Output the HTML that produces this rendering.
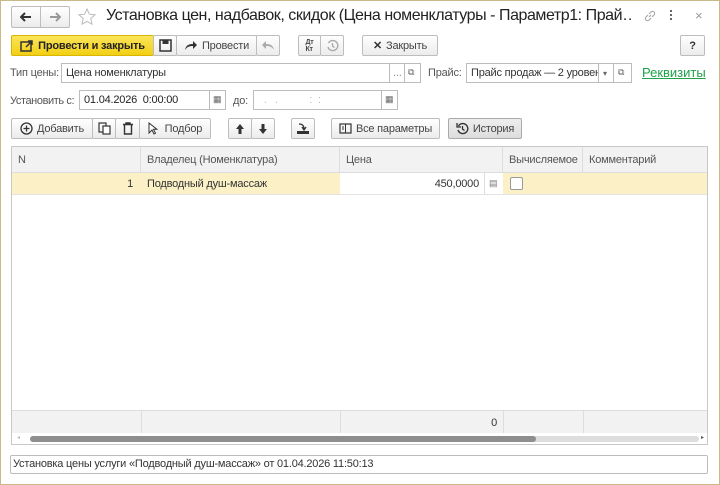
<!DOCTYPE html>
<html><head><meta charset="utf-8"><style>
*{box-sizing:border-box;margin:0;padding:0}
body{width:720px;height:485px;background:#fff;font-family:"Liberation Sans",Arial,sans-serif;font-size:11px;color:#333;position:relative;overflow:hidden;letter-spacing:-0.2px}
.frame{position:absolute;left:0;top:0;width:720px;height:485px;border:1px solid #c9b98a}
.a{position:absolute}
.btn{position:absolute;border:1px solid #bdbdbd;border-radius:2px;background:linear-gradient(#fff,#ececec);height:21px;display:flex;align-items:center;justify-content:center;color:#444;font-size:11px;white-space:nowrap;gap:4px}
.inp{position:absolute;border:1px solid #bcbcbc;background:#fff;height:20px;padding:3px 4px;font-size:11px;color:#333;white-space:nowrap;overflow:hidden}
.lbl{position:absolute;color:#555;font-size:11px}
.th{position:absolute;top:0;height:26px;border-right:1px solid #ddd;padding:7px 6px;color:#555}
</style></head><body>
<div class="frame"></div>
<!-- title -->
<div class="btn" style="left:11px;top:6px;width:30px;height:22px;border-radius:2px 0 0 2px"><svg width="12" height="10"><path d="M11 5H2M5 1L1 5l4 4" stroke="#333" stroke-width="2" fill="none"/></svg></div>
<div class="btn" style="left:40px;top:6px;width:30px;height:22px;border-radius:0 2px 2px 0"><svg width="12" height="10"><path d="M1 5h9M7 1l4 4-4 4" stroke="#999" stroke-width="2" fill="none"/></svg></div>
<svg class="a" style="left:78px;top:8px" width="18" height="18"><path d="M9 1l2.4 5.2 5.6.6-4.2 3.8 1.2 5.6L9 13.4 4 16.2l1.2-5.6L1 6.8l5.6-.6z" fill="none" stroke="#bbb"/></svg>
<div class="a" style="left:106px;top:7px;font-size:16px;color:#222;white-space:nowrap;letter-spacing:-0.45px;width:528px;overflow:hidden">Установка цен, надбавок, скидок (Цена номенклатуры - Параметр1: Прай…</div>
<svg class="a" style="left:643px;top:9px" width="14" height="14"><path d="M6 8l2-2M5 6L3 8a2 2 0 0 0 3 3l2-2M9 8l2-2a2 2 0 0 0-3-3L6 5" fill="none" stroke="#aaa" stroke-width="1.2"/></svg>
<div class="a" style="left:670px;top:10px;width:2px;height:2px;background:#666;box-shadow:0 4px #666,0 8px #666"></div>
<div class="a" style="left:695px;top:8px;color:#999;font-size:13px">×</div>
<!-- toolbar -->
<div class="btn" style="left:11px;top:35px;width:143px;background:linear-gradient(#fbe55a,#f2cf14);border-color:#d9b400;color:#222;font-weight:bold"><svg width="14" height="13"><rect x="1" y="3" width="10" height="9" fill="none" stroke="#333" stroke-width="1.5"/><path d="M6 8l6-6M8 2h4v4" stroke="#333" stroke-width="1.5" fill="none"/></svg>Провести и закрыть</div>
<div class="btn" style="left:153px;top:35px;width:24px"><svg width="13" height="13"><rect x="1" y="1" width="11" height="11" fill="none" stroke="#333" stroke-width="1.5"/><rect x="3.5" y="1" width="6" height="4" fill="#333"/></svg></div>
<div class="btn" style="left:176px;top:35px;width:81px"><svg width="14" height="11"><path d="M1 10C2 5 5 4 9 4V1l4 4-4 4V6C5 6 3 7 1 10z" fill="#333"/></svg>Провести</div>
<div class="btn" style="left:256px;top:35px;width:24px"><svg width="14" height="11"><path d="M13 10C12 5 9 4 5 4V1L1 5l4 4V6c4 0 6 1 8 4z" fill="#aaa"/></svg></div>
<div class="btn" style="left:298px;top:35px;width:23px;font-size:7px;font-weight:bold;line-height:7px;flex-direction:column;gap:0">Дт<br>Кт</div>
<div class="btn" style="left:320px;top:35px;width:24px"><svg width="13" height="13"><path d="M2.5 4A5 5 0 1 1 2 8" fill="none" stroke="#aaa" stroke-width="1.4"/><path d="M6.5 4v3l2 1.5" fill="none" stroke="#aaa" stroke-width="1.3"/></svg></div>
<div class="btn" style="left:362px;top:35px;width:76px"><span style="font-weight:bold;color:#333">✕</span> Закрыть</div>
<div class="btn" style="left:680px;top:35px;width:25px;font-weight:bold;color:#333">?</div>
<!-- fields -->
<div class="lbl" style="left:10px;top:67px">Тип цены:</div>
<div class="inp" style="left:61px;top:63px;width:329px">Цена номенклатуры</div>
<div class="inp" style="left:389px;top:63px;width:16px;padding:3px 3px;color:#888">...</div>
<div class="inp" style="left:404px;top:63px;width:17px;padding:3px 3px;color:#666;font-size:9px">⧉</div>
<div class="lbl" style="left:428px;top:67px">Прайс:</div>
<div class="inp" style="left:466px;top:63px;width:133px">Прайс продаж — 2 уровен</div>
<div class="inp" style="left:598px;top:63px;width:16px;padding:5px 4px;color:#666;font-size:8px">▾</div>
<div class="inp" style="left:613px;top:63px;width:19px;padding:3px 4px;color:#666;font-size:9px">⧉</div>
<div class="a" style="left:642px;top:65px;color:#1ea14a;font-size:13px;text-decoration:underline;letter-spacing:0">Реквизиты</div>
<div class="lbl" style="left:10px;top:95px;letter-spacing:-0.4px">Установить с:</div>
<div class="inp" style="left:79px;top:90px;width:131px;color:#222">01.04.2026 &nbsp;0:00:00</div>
<div class="inp" style="left:209px;top:90px;width:17px;padding:3px 3px;color:#666;font-size:9px">▦</div>
<div class="lbl" style="left:233px;top:95px">до:</div>
<div class="inp" style="left:253px;top:90px;width:129px;color:#bbb">&nbsp;&nbsp;.&nbsp;&nbsp;&nbsp;.&nbsp;&nbsp;&nbsp;&nbsp;&nbsp;&nbsp;&nbsp;&nbsp;&nbsp;&nbsp;&nbsp;:&nbsp;&nbsp;:</div>
<div class="inp" style="left:381px;top:90px;width:17px;padding:3px 3px;color:#666;font-size:9px">▦</div>
<!-- buttons row -->
<div class="btn" style="left:11px;top:118px;width:82px"><svg width="13" height="13"><circle cx="6.5" cy="6.5" r="5.5" fill="none" stroke="#333" stroke-width="1.3"/><path d="M6.5 3.5v6M3.5 6.5h6" stroke="#333" stroke-width="1.3"/></svg>Добавить</div>
<div class="btn" style="left:92px;top:118px;width:24px"><svg width="13" height="13"><rect x="1" y="1" width="7" height="9" fill="none" stroke="#333" stroke-width="1.2"/><rect x="5" y="4" width="7" height="8" fill="#fff" stroke="#333" stroke-width="1.2"/></svg></div>
<div class="btn" style="left:115px;top:118px;width:25px"><svg width="12" height="13"><path d="M1 2.5h10M4 2.5V1h4v1.5M2.5 3v9h7V3" fill="none" stroke="#333" stroke-width="1.4"/></svg></div>
<div class="btn" style="left:139px;top:118px;width:72px"><svg width="10" height="13"><path d="M1 1v10l3-3 2 4 1.5-.7-2-4H9z" fill="#fff" stroke="#333"/></svg>&nbsp;Подбор</div>
<div class="btn" style="left:228px;top:118px;width:24px"><svg width="10" height="12"><path d="M5 1L1 6h2.5v5h3V6H9z" fill="#333"/></svg></div>
<div class="btn" style="left:251px;top:118px;width:24px"><svg width="10" height="12"><path d="M5 11L1 6h2.5V1h3v5H9z" fill="#333"/></svg></div>
<div class="btn" style="left:291px;top:118px;width:24px"><svg width="14" height="13"><path d="M3 2c3 0 5 1 5 5M6 5l2 3 2-3" fill="none" stroke="#333" stroke-width="1.3"/><rect x="1" y="9" width="12" height="3" fill="#333"/></svg></div>
<div class="btn" style="left:331px;top:118px;width:109px"><svg width="13" height="11"><rect x="1" y="1" width="11" height="9" fill="none" stroke="#333" stroke-width="1.2"/><path d="M6.5 1v9M3 4h2M3 6h2" stroke="#333"/></svg>Все параметры</div>
<div class="btn" style="left:448px;top:118px;width:74px;background:linear-gradient(#eee,#ddd);border-color:#aaa"><svg width="13" height="13"><path d="M2.5 4A5 5 0 1 1 2 8" fill="none" stroke="#333" stroke-width="1.4"/><path d="M1 1v4h4" fill="none" stroke="#333" stroke-width="1.3"/><path d="M6.5 4v3l2 1.5" fill="none" stroke="#333" stroke-width="1.3"/></svg>История</div>
<!-- table -->
<div class="a" style="left:11px;top:146px;width:697px;height:299px;border:1px solid #c8c8c8;background:#fff;overflow:hidden">
 <div class="a" style="left:0;top:0;width:697px;height:26px;background:#f2f2f2;border-bottom:1px solid #ddd">
  <div class="th" style="left:0;width:129px">N</div>
  <div class="th" style="left:129px;width:199px">Владелец (Номенклатура)</div>
  <div class="th" style="left:328px;width:163px">Цена</div>
  <div class="th" style="left:491px;width:80px">Вычисляемое</div>
  <div class="th" style="left:571px;width:126px;border:0">Комментарий</div>
 </div>
 <div class="a" style="left:0;top:26px;width:697px;height:22px;background:#fbf0c6;border-bottom:1px solid #e3e3e3">
  <div class="a" style="left:0;width:129px;top:5px;text-align:right;padding-right:8px;color:#333">1</div>
  <div class="a" style="left:135px;top:5px;color:#333">Подводный душ-массаж</div>
  <div class="a" style="left:328px;top:0;width:144px;height:21px;background:#fff;text-align:right;padding:5px 5px 0 0;color:#333">450,0000</div>
  <div class="a" style="left:472px;top:0;width:19px;height:21px;background:#fff;border-left:1px solid #ddd;color:#777;font-size:9px;padding:5px 4px">▤</div>
  <div class="a" style="left:498px;top:4px;width:13px;height:13px;border:1px solid #999;border-radius:2px;background:#fff"></div>
 </div>
 <div class="a" style="left:0;top:263px;width:697px;height:23px;background:#f2f2f2;border-top:1px solid #ddd">
  <div class="a" style="left:129px;top:0;height:23px;border-left:1px solid #ddd"></div>
  <div class="a" style="left:328px;top:0;height:23px;border-left:1px solid #ddd"></div>
  <div class="a" style="left:491px;top:0;height:23px;border-left:1px solid #ddd"></div>
  <div class="a" style="left:571px;top:0;height:23px;border-left:1px solid #ddd"></div>
  <div class="a" style="left:328px;top:6px;width:157px;text-align:right;color:#333">0</div>
 </div>
 <div class="a" style="left:0;top:286px;width:697px;height:12px;background:#fff">
  <div class="a" style="left:18px;top:3px;width:669px;height:6px;background:#ddd;border-radius:3px"></div>
  <div class="a" style="left:18px;top:3px;width:506px;height:6px;background:#8e8e8e;border-radius:3px"></div>
  <div class="a" style="left:5px;top:1px;color:#bbb;font-size:6px">◂</div>
  <div class="a" style="left:689px;top:1px;color:#555;font-size:6px">▸</div>
 </div>
</div>
<div class="inp" style="left:10px;top:455px;width:698px;height:19px;padding:2px 2px;color:#333;border-radius:2px">Установка цены услуги «Подводный душ-массаж» от 01.04.2026 11:50:13</div>
</body></html>
